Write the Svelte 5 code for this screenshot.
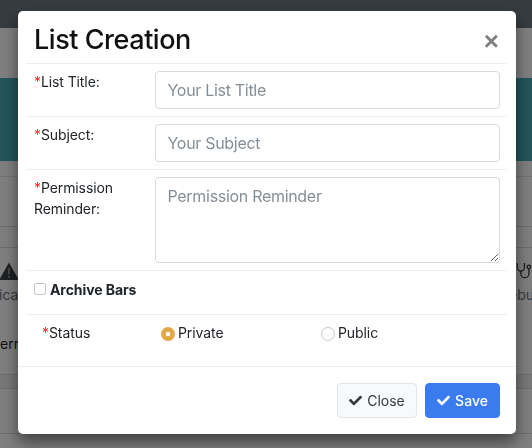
<script>
  const fields = [
    { label: 'List Title:', placeholder: 'Your List Title' },
    { label: 'Subject:', placeholder: 'Your Subject' }
  ];
</script>

<div class="page">
  <div class="topbar"></div>
  <div class="subbar"></div>
  <div class="hero"></div>
  <div class="strip"></div>
  <div class="tabs"></div>
  <div class="tools">
    <div class="tool left">
      <svg viewBox="0 0 24 22" width="20" height="18"><path d="M12 .5 L23.500 21 a.8 .8 0 0 1 -.5 1 H1 a.8 .8 0 0 1 -.5 -1 Z" fill="#3c4043"/><rect x="10.800" y="7" width="2.400" height="8" fill="#8a8a8a"/><rect x="10.800" y="17" width="2.400" height="2.400" fill="#8a8a8a"/></svg>
      <span>ica</span>
    </div>
    <div class="tool right">
      <svg viewBox="0 0 18 20" width="16" height="18"><path d="M1.500 1 V6 a4 4 0 0 0 8 0 V1 M5.500 10 V13 a4.500 4.500 0 0 0 9 0 V8" fill="none" stroke="#3c4043" stroke-width="1.500"/><circle cx="14.500" cy="5.500" r="2" fill="none" stroke="#3c4043" stroke-width="1.500"/></svg>
      <span>ebu</span>
    </div>
  </div>
  <div class="row-text"><span>err</span></div>
  <div class="strip2"></div>
  <div class="tail"></div>
</div>

<div class="backdrop"></div>

<div class="modal">
  <header>
    <h4>List Creation</h4>
    <span class="close">×</span>
  </header>
  <div class="body">
    {#each fields as f}
      <div class="row">
        <label class="lab"><i>*</i>{f.label}</label>
        <input type="text" placeholder={f.placeholder} />
      </div>
    {/each}
    <div class="row">
      <label class="lab"><i>*</i>Permission<br />Reminder:</label>
      <textarea placeholder="Permission Reminder"></textarea>
    </div>
    <div class="row archive">
      <span class="check"></span>
      <strong>Archive Bars</strong>
    </div>
    <div class="row status">
      <span class="slabel"><i>*</i>Status</span>
      <span class="opt private"><span class="radio on"></span>Private</span>
      <span class="opt"><span class="radio"></span>Public</span>
    </div>
  </div>
  <footer>
    <button class="btn light">
      <svg viewBox="0 0 512 512" width="13" height="13"><path fill="#343a40" d="M173.900 439.400 7.500 273c-10-10-10-26.200 0-36.200l36.200-36.200c10-10 26.200-10 36.200 0L192 312.700 432.100 72.600c10-10 26.200-10 36.200 0l36.200 36.200c10 10 10 26.200 0 36.200L210.100 439.400c-10 10-26.200 10-36.200 0z"/></svg>
      Close
    </button>
    <button class="btn primary">
      <svg viewBox="0 0 512 512" width="13" height="13"><path fill="#fff" d="M173.900 439.400 7.500 273c-10-10-10-26.200 0-36.200l36.200-36.200c10-10 26.200-10 36.200 0L192 312.700 432.100 72.600c10-10 26.200-10 36.200 0l36.200 36.200c10 10 10 26.200 0 36.200L210.100 439.400c-10 10-26.200 10-36.200 0z"/></svg>
      Save
    </button>
  </footer>
</div>

<style>
  :global(body) {
    margin: 0;
    font-family: Inter, "Liberation Sans", sans-serif;
    overflow: hidden;
  }
  .page {
    height: 448px;
    overflow: hidden;
    background: #fff;
    color: #212529;
  }
  .topbar { height: 28px; background: #6d7780; }
  .subbar { height: 50px; background: #fff; }
  .hero { height: 83px; background: #48a9b9; }
  .strip { height: 15px; border-bottom: 1px solid #e4e4e4; }
  .tabs { height: 49px; border-bottom: 1px solid #dcdcdc; }
  .tools {
    height: 61px;
    margin-top: 20px;
    display: flex;
    justify-content: space-between;
    border-top: 1px solid #dcdcdc;
    box-sizing: border-box;
  }
  .tool {
    display: flex;
    flex-direction: column;
    gap: 8px;
    font-size: 14px;
    line-height: 14px;
    padding-top: 14px;
    color: #6c757d;
  }
  .tool.left { align-items: flex-start; margin-left: -1px; }
  .tool.right { align-items: flex-start; width: 23px; }
  .tool.right svg { margin-left: 7px; }
  .row-text { height: 66px; font-size: 14px; line-height: 66px; padding-top: 3px; box-sizing: border-box; }
  .strip2 { height: 15px; background: #f0f0f0; border-top: 1px solid #dcdcdc; border-bottom: 1px solid #dcdcdc; box-sizing: border-box; }
  .tail { height: 44px; border-bottom: 1px solid #dcdcdc; }
  .backdrop {
    position: fixed;
    inset: 0;
    background: rgba(0, 0, 0, 0.5);
  }
  .modal {
    position: fixed;
    left: 18px;
    top: 11px;
    width: 498px;
    height: 423px;
    background: #fff;
    border-radius: 5px;
    box-shadow: 0 8px 16px rgba(0, 0, 0, 0.5);
    display: flex;
    flex-direction: column;
    color: #212529;
    box-sizing: border-box;
  }
  header {
    display: flex;
    align-items: center;
    justify-content: space-between;
    height: 52px;
    margin: 0 9px 0 8px;
    padding: 0 0 0 8px;
    border-bottom: 1px solid #eceef0;
    box-sizing: content-box;
  }
  h4 {
    margin: 4px 0 0;
    font-size: 27px;
    font-weight: 500;
    letter-spacing: -0.45px;
    color: #111;
  }
  .close {
    font-family: "Liberation Sans", sans-serif;
    font-size: 26px;
    font-weight: 700;
    color: #808080;
    margin: 7px 8px 0 0;
    line-height: 1;
  }
  .body { flex: 1; margin: 0 9px 0 8px; }
  .row {
    display: flex;
    align-items: flex-start;
    padding: 7px 0 7px 8px;
    border-bottom: 1px solid #eceef0;
  }
  .lab {
    width: 121px;
    font-size: 14px;
    line-height: 21px;
    flex: none;
    letter-spacing: -0.1px;
    color: #212529;
  }
  i { color: #e8262e; font-style: normal; }
  input, textarea {
    box-sizing: border-box;
    flex: none;
    width: 345px;
    border: 1px solid #d7dadf;
    border-radius: 4px;
    padding: 0 12px 0 11.500px;
    font: 16px Inter, "Liberation Sans", sans-serif;
    letter-spacing: -0.3px;
    color: #495057;
    background: #fff;
    outline: none;
  }
  input { height: 38px; }
  textarea { height: 86px; padding-top: 8px; display: block; }
  ::placeholder { color: #868e96; opacity: 1; }
  .archive {
    align-items: center;
    height: 44px;
    box-sizing: border-box;
    padding: 0 0 7px 8px;
    font-size: 14px;
    letter-spacing: -0.08px;
  }
  .check {
    width: 10px;
    height: 10px;
    border: 1px solid #c4c6c8;
    border-radius: 2px;
    margin-right: 4px;
    background: #fff;
  }
  .status {
    border-bottom: 0;
    align-items: center;
    padding: 0 0 0 16px;
    height: 35px;
    font-size: 14px;
    letter-spacing: -0.08px;
  }
  .slabel { width: 119px; flex: none; }
  .opt { display: flex; align-items: center; gap: 3px; width: 160px; flex: none; }
  .radio {
    width: 12px;
    height: 12px;
    border: 1px solid #c9c9c9;
    border-radius: 50%;
    background: #fff;
    box-sizing: content-box;
    margin-top: 2px;
  }
  .radio.on {
    border: 0;
    width: 14px;
    height: 14px;
    background: radial-gradient(circle, #fff 0 2px, #e3a847 2.6px);
  }
  footer {
    height: 68px;
    border-top: 1px solid #eceef0;
    display: flex;
    align-items: center;
    justify-content: flex-end;
    gap: 8px;
    padding: 0 16px;
    box-sizing: border-box;
  }
  .btn {
    height: 35px;
    border-radius: 4px;
    font: 14px Inter, "Liberation Sans", sans-serif;
    display: flex;
    align-items: center;
    justify-content: center;
    gap: 5px;
    box-sizing: border-box;
    padding: 0;
  }
  .light {
    width: 80px;
    background: #f8f9fa;
    border: 1px solid #e2e4e7;
    color: #343a40;
  }
  .primary {
    width: 75px;
    background: #3a7bf0;
    border: 1px solid #3a7bf0;
    color: #fff;
    font-weight: 500;
  }
</style>
